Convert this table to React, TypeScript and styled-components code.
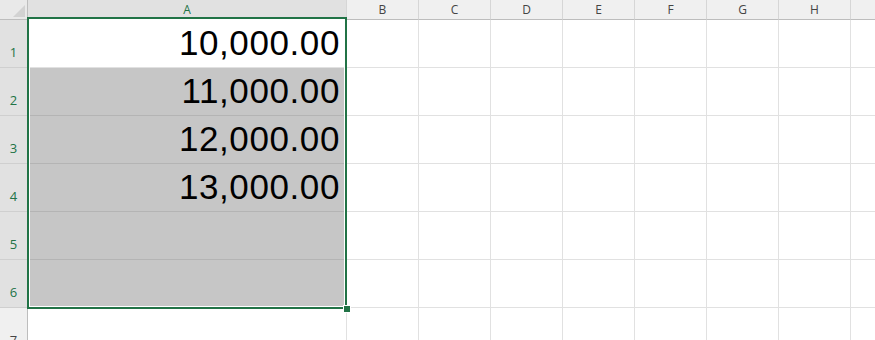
import { FC } from "react";
import styled, { createGlobalStyle } from "styled-components";

const GREEN = "#217346";

const columns = ["A", "B", "C", "D", "E", "F", "G", "H", "I"];
const rows = [1, 2, 3, 4, 5, 6, 7];
const values: Record<number, string> = {
  1: "10,000.00",
  2: "11,000.00",
  3: "12,000.00",
  4: "13,000.00",
};

// column A, rows 1-6 form the selected range; A1 is the active cell
const inRange = (row: number) => row >= 1 && row <= 6;

const App: FC = () => {
  return (
    <>
      <GlobalStyle />
      <Sheet>
        <Corner>
          <CornerMark />
        </Corner>
        {columns.map((col) => (
          <ColHeader key={col} $selected={col === "A"}>
            {col}
          </ColHeader>
        ))}
        {rows.map((row) => (
          <RowGroup key={row} row={row} />
        ))}
        <Selection>
          <FillHandle />
        </Selection>
      </Sheet>
    </>
  );
};

const RowGroup: FC<{ row: number }> = ({ row }) => {
  return (
    <>
      <RowHeader $selected={inRange(row)}>{row}</RowHeader>
      {columns.map((col) => {
        const selected = col === "A" && inRange(row) && row !== 1;
        return (
          <Cell key={col} $selected={selected}>
            {col === "A" ? values[row] : null}
          </Cell>
        );
      })}
    </>
  );
};

export default App;

const GlobalStyle = createGlobalStyle`
  *, *::before, *::after {
    box-sizing: border-box;
  }
  html, body {
    margin: 0;
    padding: 0;
    background: #ffffff;
    overflow: hidden;
  }
`;

const Sheet = styled.div`
  position: relative;
  display: grid;
  grid-template-columns: 28px 319px repeat(8, 72px);
  grid-template-rows: 20px repeat(7, 48px);
  width: 875px;
  height: 340px;
  overflow: hidden;
  font-family: "Open Sans", "Noto Sans", sans-serif;
`;

const Corner = styled.div`
  position: relative;
  background: #e9e9e9;
  border-right: 1px solid #bdbdbd;
  border-bottom: 1px solid #bdbdbd;
`;

const CornerMark = styled.div`
  position: absolute;
  right: 2px;
  bottom: 2px;
  width: 12px;
  height: 12px;
  background: #d2d2d2;
  clip-path: polygon(100% 0, 100% 100%, 0 100%);
`;

const ColHeader = styled.div<{ $selected: boolean }>`
  display: flex;
  align-items: center;
  justify-content: center;
  background: ${(p) => (p.$selected ? "#e1e1e1" : "#f0f0f0")};
  border-right: 1px solid #d6d6d6;
  border-bottom: 1px solid #bdbdbd;
  color: ${(p) => (p.$selected ? GREEN : "#444444")};
  font-size: 12px;
  line-height: 14px;
`;

const RowHeader = styled.div<{ $selected: boolean }>`
  display: flex;
  align-items: flex-end;
  justify-content: center;
  padding-bottom: 7px;
  background: ${(p) => (p.$selected ? "#e1e1e1" : "#f0f0f0")};
  border-right: 1px solid #bdbdbd;
  border-bottom: 1px solid #cfcfcf;
  color: ${(p) => (p.$selected ? GREEN : "#444444")};
  font-size: 13px;
  line-height: 16px;
`;

const Cell = styled.div<{ $selected: boolean }>`
  display: flex;
  align-items: flex-end;
  justify-content: flex-end;
  padding: 0 6px 7px 0;
  background: ${(p) => (p.$selected ? "#c6c6c6" : "#ffffff")};
  border-right: 1px solid #e1e1e1;
  border-bottom: 1px solid ${(p) => (p.$selected ? "#b4b4b4" : "#e1e1e1")};
  color: #000000;
  font-family: "Liberation Sans", Arial, sans-serif;
  font-size: 35px;
  line-height: 34px;
  letter-spacing: 0.6px;
  white-space: nowrap;
`;

// range outline drawn over the cells of A1:A6
const Selection = styled.div`
  position: absolute;
  left: 27px;
  top: 17px;
  width: 320px;
  height: 292px;
  border: 2px solid ${GREEN};
  box-shadow: inset 0 0 0 1px #ffffff;
  pointer-events: none;
`;

const FillHandle = styled.div`
  position: absolute;
  right: -6px;
  bottom: -6px;
  width: 8px;
  height: 8px;
  background: ${GREEN};
  border: 1px solid #ffffff;
`;
